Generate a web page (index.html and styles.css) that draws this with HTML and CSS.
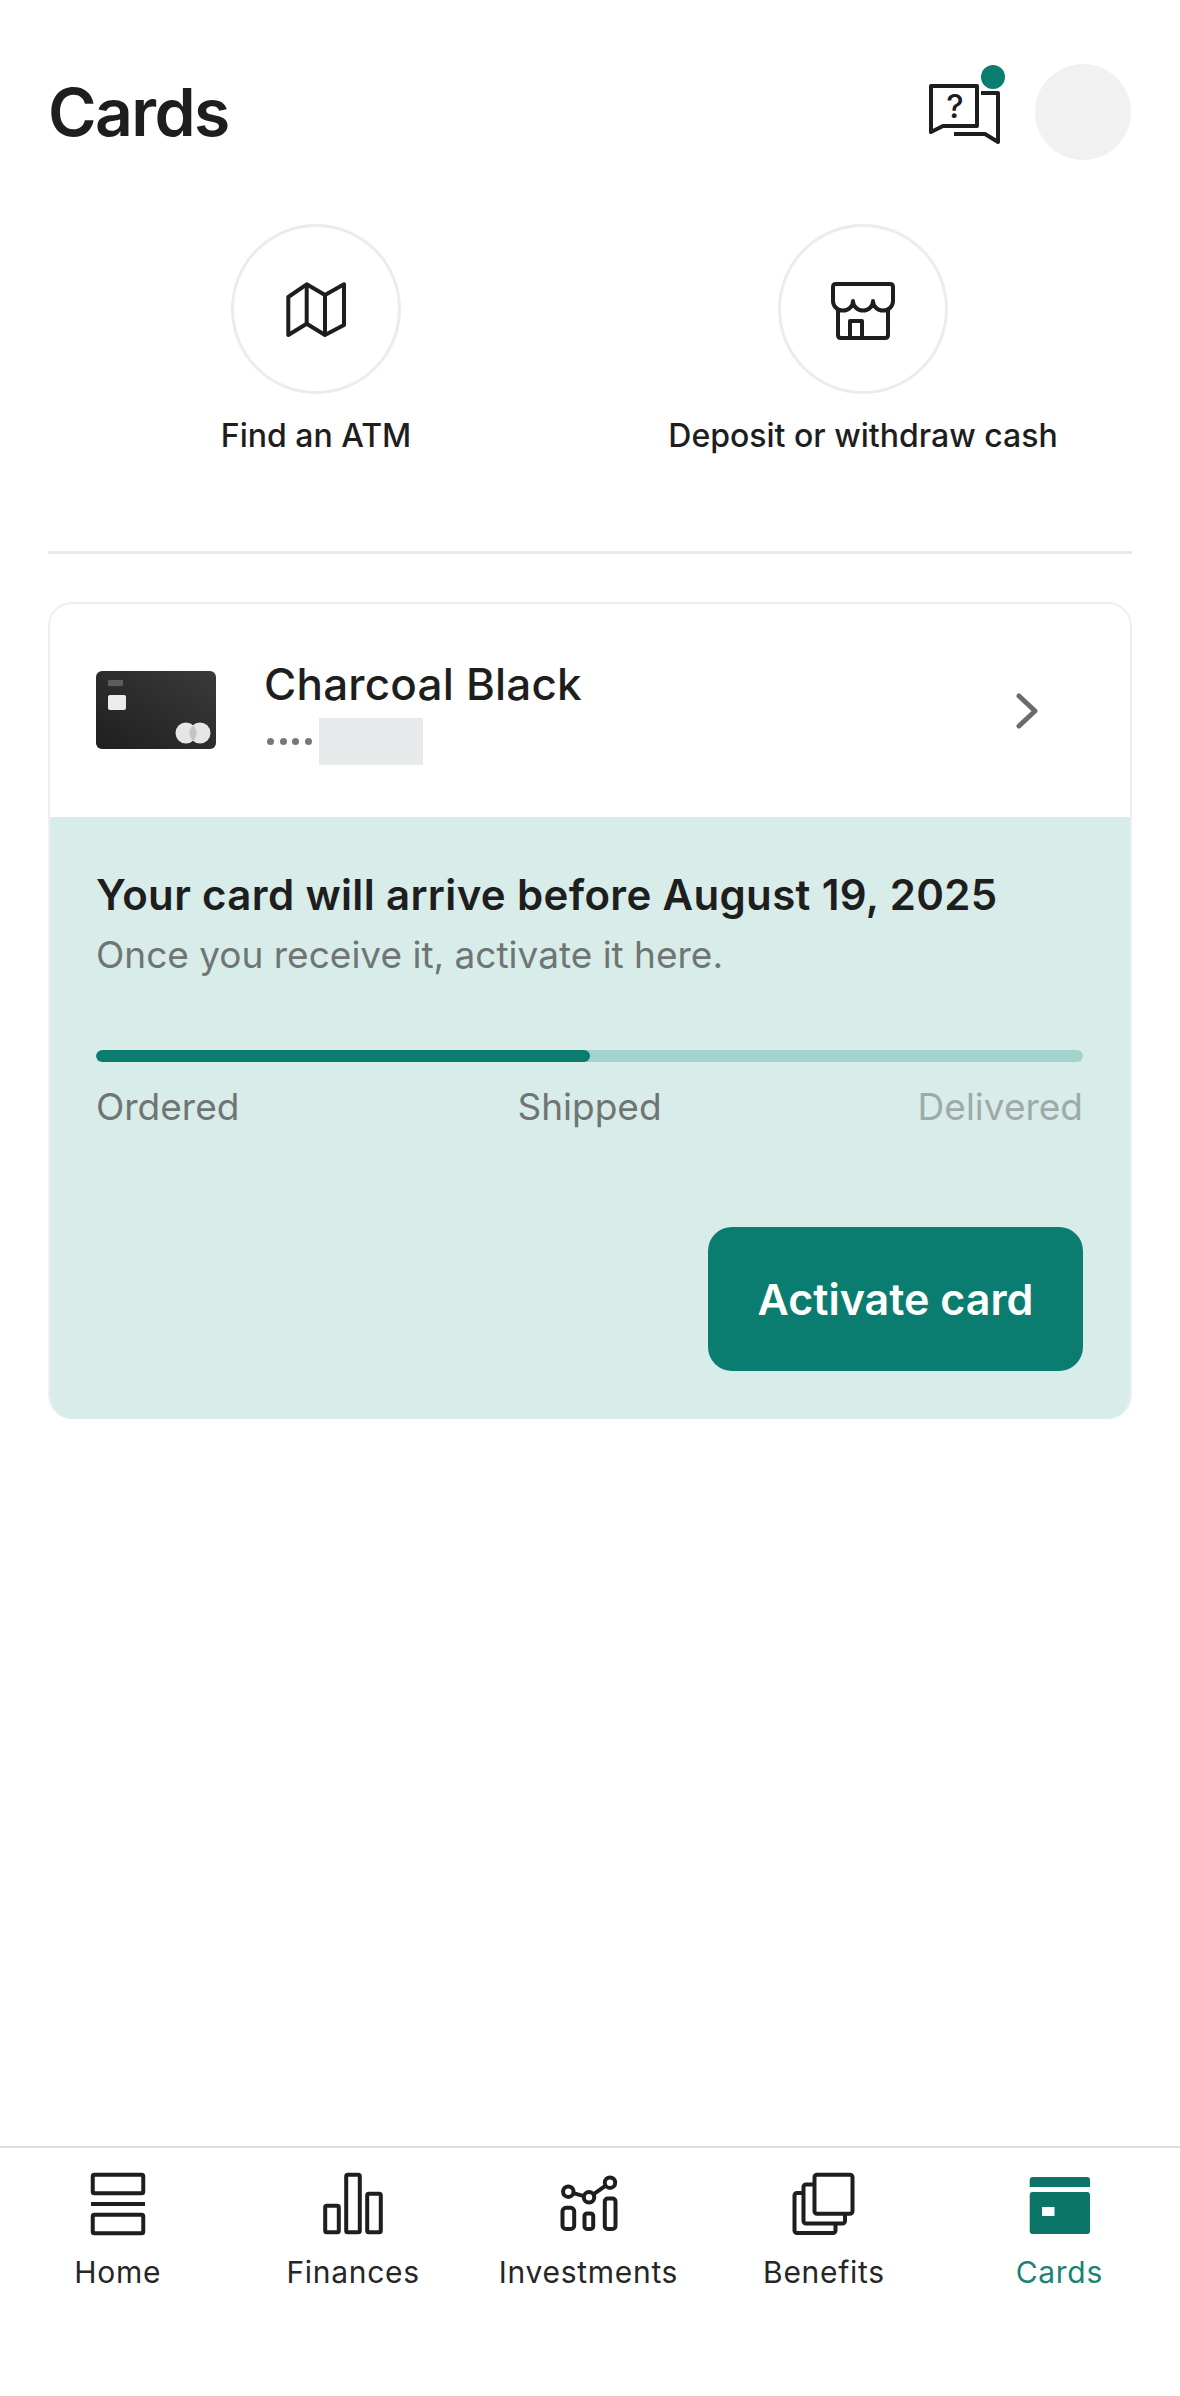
FILE: index.html
```html
<!DOCTYPE html>
<html lang="en">
<head>
<meta charset="utf-8">
<title>Cards</title>
<link rel="stylesheet" href="styles.css">
</head>
<body>
<div class="screen">
  <header class="topbar">
    <h1 class="title">Cards</h1>
    <div class="top-actions">
      <div class="help">
        <svg class="help-icon" viewBox="0 0 72 62" width="72" height="62">
          <path class="ln" d="M3 3H49V43H15L3 49Z"/>
          <path class="ln" d="M53 10H70V59L57 51H26"/>
          <text class="q" x="27" y="35" text-anchor="middle">?</text>
        </svg>
        <span class="dot"></span>
      </div>
      <div class="avatar"></div>
    </div>
  </header>

  <section class="shortcuts">
    <a class="shortcut">
      <span class="ring">
        <svg viewBox="-32 -32 64 64" width="64" height="64">
          <path class="ln" d="M-27.7 -12L-9.3 -24.7L9 -14L28 -24.7V16L9 26L-9.3 14.7L-27.7 26Z"/>
          <path class="ln" d="M-9.3 -24.7V14.7M9 -14V26"/>
        </svg>
      </span>
      <span class="shortcut-label">Find an ATM</span>
    </a>
    <a class="shortcut">
      <span class="ring">
        <svg viewBox="-32 -32 64 64" width="64" height="64">
          <path class="ln" d="M-27 -25H27Q30 -25 30 -22V-8A10 9.5 0 0 1 10 -8A10 9.5 0 0 1 -10 -8A10 9.5 0 0 1 -30 -8V-22Q-30 -25 -27 -25Z"/>
          <path class="ln" d="M-25 -1V26Q-25 29 -22 29H22Q25 29 25 26V-1"/>
          <path class="ln" d="M-13 29V12H-1V29"/>
        </svg>
      </span>
      <span class="shortcut-label">Deposit or withdraw cash</span>
    </a>
  </section>

  <hr class="rule">

  <article class="card">
    <div class="card-head">
      <svg class="thumb" viewBox="0 0 120 78" width="120" height="78">
        <defs>
          <linearGradient id="charcoal" x1="0" y1="1" x2="1" y2="0">
            <stop offset="0" stop-color="#1f1f1f"/>
            <stop offset="1" stop-color="#3a3a3a"/>
          </linearGradient>
        </defs>
        <rect width="120" height="78" rx="6" fill="url(#charcoal)"/>
        <rect x="12" y="9" width="15" height="6" fill="#5c5c5c"/>
        <rect x="12" y="24" width="18" height="15" rx="2" fill="#ececea"/>
        <circle cx="90" cy="62" r="10.5" fill="#e6e6e4"/>
        <circle cx="104" cy="62" r="10.5" fill="#e6e6e4"/>
        <path d="M97 54.2a10.5 10.5 0 0 1 0 15.6a10.5 10.5 0 0 1 0-15.6Z" fill="#c4c4c2"/>
      </svg>
      <div class="card-name">
        <div class="name">Charcoal Black</div>
        <div class="number">
          <span class="pips"><i></i><i></i><i></i><i></i></span>
          <span class="masked"></span>
        </div>
      </div>
      <svg class="chev" viewBox="0 0 28 44" width="28" height="44">
        <path d="M6 7L22 22L6 37" fill="none" stroke="#6b6b6b" stroke-width="5" stroke-linecap="round" stroke-linejoin="round"/>
      </svg>
    </div>
    <div class="card-body">
      <h2 class="arrive">Your card will arrive before August 19, 2025</h2>
      <p class="hint">Once you receive it, activate it here.</p>
      <div class="track"><div class="track-fill"></div></div>
      <div class="steps">
        <span class="step">Ordered</span>
        <span class="step step-mid">Shipped</span>
        <span class="step step-next">Delivered</span>
      </div>
      <div class="cta-row">
        <button class="cta">Activate card</button>
      </div>
    </div>
  </article>

  <nav class="tabs">
    <a class="tab">
      <svg viewBox="0 0 72 72" width="72" height="72">
        <rect class="ln" x="10.75" y="6.75" width="50.5" height="18.5" rx="1.5"/>
        <path class="ln" d="M9 36H63"/>
        <rect class="ln" x="10.75" y="46.75" width="50.5" height="18.5" rx="1.5"/>
      </svg>
      <span>Home</span>
    </a>
    <a class="tab">
      <svg viewBox="0 0 72 72" width="72" height="72">
        <rect class="ln" x="8.2" y="37.75" width="13.6" height="26.5" rx="1.5"/>
        <rect class="ln" x="29.2" y="6.75" width="13.6" height="57.5" rx="1.5"/>
        <rect class="ln" x="50.2" y="25.75" width="13.6" height="38.5" rx="1.5"/>
      </svg>
      <span>Finances</span>
    </a>
    <a class="tab">
      <svg viewBox="0 0 72 72" width="72" height="72">
        <circle class="ln" cx="16.3" cy="23.7" r="5.2"/>
        <circle class="ln" cx="37" cy="29.3" r="5.2"/>
        <circle class="ln" cx="58" cy="14.7" r="5.2"/>
        <path class="ln" d="M21.3 25.1L32 28.1M41.3 26.3L53.7 17.7"/>
        <rect class="ln" x="10.5" y="39.8" width="11.7" height="21.1" rx="3.5"/>
        <rect class="ln" x="32.5" y="45.5" width="8.7" height="15.4" rx="2.5"/>
        <rect class="ln" x="52.8" y="30.5" width="10.7" height="30.4" rx="3"/>
      </svg>
      <span>Investments</span>
    </a>
    <a class="tab">
      <svg viewBox="0 0 72 72" width="72" height="72">
        <rect class="ln" x="26.5" y="6.75" width="38" height="39" rx="2.5"/>
        <path class="ln" d="M26.5 16.5H18A2.5 2.5 0 0 0 15.5 19V53A2.5 2.5 0 0 0 18 55.5H54.5A2.5 2.5 0 0 0 57 53V45.75"/>
        <path class="ln" d="M15.5 25H9A2.5 2.5 0 0 0 6.5 27.5V62.5A2.5 2.5 0 0 0 9 65H45A2.5 2.5 0 0 0 47.5 62.5V55.5"/>
      </svg>
      <span>Benefits</span>
    </a>
    <a class="tab tab-active">
      <svg viewBox="0 0 72 72" width="72" height="72">
        <path class="solid" d="M6.7 12A3 3 0 0 1 9.7 9H64A3 3 0 0 1 67 12V19H6.7Z"/>
        <rect class="solid" x="6.7" y="24" width="60.3" height="42" rx="3"/>
        <rect x="19" y="39" width="12.5" height="9" fill="#fff"/>
      </svg>
      <span>Cards</span>
    </a>
  </nav>
</div>
</body>
</html>
```
FILE: styles.css
```css
* { box-sizing: border-box; }

html, body { margin: 0; padding: 0; background: #fff; }

body {
  font-family: Inter, "Liberation Sans", sans-serif;
  color: #1e1e1e;
}

.screen {
  width: 1180px;
  height: 2396px;
  display: flex;
  flex-direction: column;
  padding: 0 48px;
}

.ln {
  fill: none;
  stroke: #1e1e1e;
  stroke-width: 4;
  stroke-linejoin: round;
}

.solid { fill: #0b7568; }

/* header */
.topbar {
  height: 224px;
  display: flex;
  align-items: flex-start;
  justify-content: space-between;
  padding-top: 64px;
}

.title {
  margin: 0;
  font-size: 66px;
  line-height: 96px;
  font-weight: 600;
  letter-spacing: -1.6px;
}

.top-actions {
  display: flex;
  align-items: flex-start;
  gap: 35px;
  padding-right: 1px;
}

.help {
  position: relative;
  width: 72px;
  height: 96px;
  padding-top: 19px;
}

.help-icon { display: block; }

.q {
  font-family: Inter, sans-serif;
  font-size: 33px;
  font-weight: 500;
  fill: #1e1e1e;
}

.dot {
  position: absolute;
  top: 1px;
  right: -5px;
  width: 24px;
  height: 24px;
  border-radius: 50%;
  background: #0b7d70;
}

.avatar {
  width: 96px;
  height: 96px;
  border-radius: 50%;
  background: #f1f1f1;
}

/* shortcut buttons */
.shortcuts {
  display: grid;
  grid-template-columns: 536px 538px;
  column-gap: 10px;
  justify-items: center;
  height: 327px;
}

.shortcut {
  display: flex;
  flex-direction: column;
  align-items: center;
  width: 100%;
  height: 0;
}

.ring {
  flex: none;
  width: 170px;
  height: 170px;
  border: 3px solid #ececec;
  border-radius: 50%;
  display: flex;
  align-items: center;
  justify-content: center;
}

.shortcut-label {
  margin-top: 22px;
  font-size: 32px;
  line-height: 40px;
  font-weight: 500;
  white-space: nowrap;
}

.rule {
  width: 100%;
  height: 3px;
  margin: 0;
  border: 0;
  background: #e9e9e9;
}

/* card panel */
.card {
  margin-top: 48px;
  height: 817px;
  border: 2px solid #efefef;
  border-bottom: 0;
  border-radius: 24px;
  overflow: hidden;
  display: flex;
  flex-direction: column;
}

.card-head {
  flex: none;
  height: 213px;
  display: flex;
  align-items: center;
  padding: 0 46px;
}

.thumb { flex: none; margin-top: -2px; }

.card-name {
  flex: 1;
  margin-left: 48px;
  padding-top: 3px;
}

.name {
  font-size: 44px;
  line-height: 50px;
  font-weight: 500;
  letter-spacing: 0.2px;
}

.number {
  display: flex;
  align-items: center;
  gap: 7px;
  margin-top: 9px;
}

.pips {
  display: flex;
  gap: 5.7px;
  margin-left: 3px;
}

.pips i {
  width: 7px;
  height: 7px;
  border-radius: 50%;
  background: #777;
}

.masked {
  width: 104px;
  height: 47px;
  background: #e6eaea;
}

.chev { margin-right: 43px; }

.card-body {
  flex: 1;
  background: #d8ecE9;
  margin: 0 -2px;
  padding: 51px 49px 0 48px;
}

.arrive {
  margin: 0;
  font-size: 42px;
  line-height: 54px;
  font-weight: 600;
  letter-spacing: 0.35px;
}

.hint {
  margin: 8px 0 0;
  font-size: 37px;
  line-height: 50px;
  color: #6f7573;
}

.track {
  height: 12px;
  margin-top: 70px;
  border-radius: 6px;
  background: #a5d2cd;
  overflow: hidden;
}

.track-fill {
  width: 50%;
  height: 100%;
  border-radius: 6px;
  background: #0b7d70;
}

.steps {
  display: grid;
  grid-template-columns: 1fr auto 1fr;
  margin-top: 23px;
  font-size: 37px;
  line-height: 44px;
  color: #6f7573;
}

.step-next { color: #9eaaa8; text-align: right; }

.cta-row {
  display: flex;
  justify-content: flex-end;
  margin-top: 98px;
}

.cta {
  width: 375px;
  height: 144px;
  border: 0;
  border-radius: 24px;
  background: #0b7d70;
  color: #fff;
  font-family: inherit;
  font-size: 43px;
  font-weight: 600;
}

/* bottom tabs */
.tabs {
  margin: auto -48px 0;
  height: 250px;
  border-top: 2px solid #dcdcdc;
  display: grid;
  grid-template-columns: repeat(5, 1fr);
  padding: 20px 3px 0 0;
}

.tab {
  display: flex;
  flex-direction: column;
  align-items: center;
  font-size: 30px;
  line-height: 40px;
  letter-spacing: 0.7px;
  color: #262626;
}

.tab span { margin-top: 12px; }

.tab-active { color: #1b8276; }
```
